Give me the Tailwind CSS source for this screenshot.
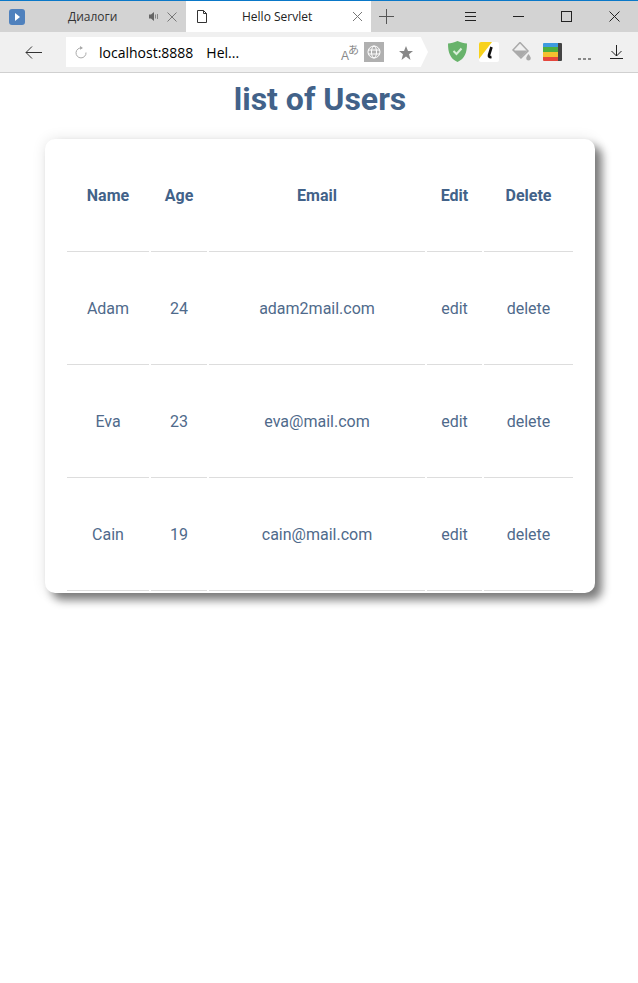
<!DOCTYPE html>
<html>
<head>
<meta charset="utf-8">
<script src="https://cdn.jsdelivr.net/npm/@tailwindcss/browser@4"></script>
</head>
<body class="bg-white font-['Roboto',sans-serif] h-[983px] overflow-hidden">
<div class="h-[73px] font-['Open_Sans','Noto_Sans',sans-serif] border-b border-[#d0d0d0]">
  <div class="h-px bg-[#0a78c8]"></div>
  <div class="h-[31px] bg-[#d3d3d3] flex items-stretch">
    <div class="w-[186px] flex items-center pl-[9px] shrink-0">
      <svg width="16" height="16" viewBox="0 0 16 16"><rect width="16" height="16" rx="3" fill="#4f81bd"/><path d="M6 4l5 4-5 4z" fill="#fff"/></svg>
      <span class="ml-[43px] text-[12px] text-[#333]">Диалоги</span>
      <svg class="ml-[32px]" width="10" height="9" viewBox="0 0 10 9"><path d="M0 2.500h2l3-2.500v9l-3-2.500H0z" fill="#666"/><path d="M6.500 2.500v4M8.500 2v5" stroke="#888" stroke-width="1"/></svg>
      <svg class="ml-[8px]" width="10" height="10" viewBox="0 0 10 10"><path d="M.5.500l9 9M9.500.500l-9 9" stroke="#777" fill="none"/></svg>
    </div>
    <div class="w-[185px] bg-white flex items-center shrink-0 pl-[11px]">
      <svg width="10" height="13" viewBox="0 0 10 13"><path d="M.5.500h6l3 3v9h-9zM6.500.500v3h3" fill="none" stroke="#333"/></svg>
      <span class="ml-[35px] text-[12px] text-[#222]">Hello Servlet</span>
      <svg class="ml-[41px]" width="9" height="9" viewBox="0 0 9 9"><path d="M0 0l9 9M9 0L0 9" stroke="#777" fill="none"/></svg>
    </div>
    <div class="flex-1 flex items-center pl-[8px] pr-[18px]">
      <svg width="15" height="15" viewBox="0 0 15 15"><path d="M7.500 0v15M0 7.500h15" stroke="#555"/></svg>
      <svg class="ml-[71px]" width="11" height="9" viewBox="0 0 11 9"><path d="M0 .500h11M0 4.500h11M0 8.500h11" stroke="#222"/></svg>
      <svg class="ml-[37px]" width="11" height="1" viewBox="0 0 11 1"><path d="M0 .500h11" stroke="#222"/></svg>
      <svg class="ml-[37px]" width="11" height="11" viewBox="0 0 11 11"><rect x=".5" y=".5" width="10" height="10" fill="none" stroke="#222"/></svg>
      <svg class="ml-[37px]" width="11" height="11" viewBox="0 0 11 11"><path d="M.5.500l10 10M10.500.500l-10 10" stroke="#222" fill="none"/></svg>
    </div>
  </div>
  <div class="h-[40px] bg-[#f0f0f0] flex items-center relative">
    <svg class="ml-[25px]" width="17" height="13" viewBox="0 0 17 13"><path d="M17 6.500H1M7 .500l-6 6 6 6" fill="none" stroke="#333"/></svg>
    <div class="ml-[24px] h-[30px] w-[362px] flex items-center bg-white relative [clip-path:polygon(0_0,98%_0,100%_50%,98%_100%,0_100%)]">
      <svg class="ml-[9px]" width="12" height="13" viewBox="0 0 12 13"><path d="M7 2a5 5 0 1 0 4 4.500" fill="none" stroke="#aaa"/><path d="M5 0l3 1.900L5 3.800z" fill="#aaa"/></svg>
      <span class="ml-[12px] text-[14px] text-black">localhost:8888</span>
      <span class="ml-[13px] text-[14px] text-black">Hel...</span>
      <span class="absolute left-[275px] top-[13px] text-[12px] leading-none text-[#888] font-['Liberation_Sans',sans-serif]">A</span>
      <span class="absolute left-[282px] top-[7px] text-[11px] leading-none text-[#888] font-['Noto_Sans_CJK_JP',sans-serif]">あ</span>
      <div class="absolute left-[298px] top-[5px] w-[20px] h-[20px] bg-[#b0b0b0] flex items-center justify-center">
        <svg width="14" height="14" viewBox="0 0 14 14"><g fill="none" stroke="#fff"><circle cx="7" cy="7" r="6"/><ellipse cx="7" cy="7" rx="2.500" ry="6"/><path d="M1 5h12M1 9h12"/></g></svg>
      </div>
      <svg class="absolute left-[333px] top-[9px]" width="14" height="14" viewBox="0 0 14 14"><path d="M7 0l2 5h5l-4 3.200L11.500 14 7 10.600 2.500 14 4 8.200 0 5h5z" fill="#888"/></svg>
    </div>
    <svg class="absolute left-[448px] top-[9px]" width="19" height="21" viewBox="0 0 19 21"><path d="M9.500 0C6 1.500 3 2.200 0 2.500c0 9 2 15 9.500 18.500C17 17.500 19 11.500 19 2.500 16 2.200 13 1.500 9.500 0z" fill="#68b36b"/><path d="M5.500 10l3 3 5-5.500" fill="none" stroke="#d9efd9" stroke-width="2"/></svg>
    <svg class="absolute left-[479px] top-[10px]" width="20" height="20" viewBox="0 0 20 20"><rect width="20" height="20" rx="2" fill="#fff"/><path d="M0 2a2 2 0 0 1 2-2h11L0 17z" fill="#f8d21c"/><path d="M12.500 5L10 13q-.6 2.500 2.500 2" fill="none" stroke="#111" stroke-width="2.600"/></svg>
    <svg class="absolute left-[511px] top-[10px]" width="21" height="20" viewBox="0 0 21 20"><path d="M9 .500L2 8l8 8 7-7z" fill="none" stroke="#aaa" stroke-width="1.500"/><path d="M2.500 8.500h14L10 15.500z" fill="#aaa"/><path d="M17.500 12c-1 1.500-2.300 3-2.300 4.200a2.300 2.300 0 0 0 4.600 0c0-1.200-1.300-2.700-2.300-4.200z" fill="#aaa"/></svg>
    <svg class="absolute left-[543px] top-[11px]" width="19" height="19" viewBox="0 0 19 19"><rect x="14" width="5" height="18" rx="1" fill="#444"/><path d="M1 0h14v4H0V1a1 1 0 0 1 1-1z" fill="#3d9be0"/><rect y="4" width="15" height="5" fill="#4caf3f"/><rect y="9" width="15" height="5" fill="#f3c02f"/><path d="M0 14h15v4H1a1 1 0 0 1-1-1z" fill="#e5473d"/></svg>
    <svg class="absolute left-[578px] top-[26px]" width="13" height="2" viewBox="0 0 13 2"><path d="M0 1h3M5 1h3M10 1h3" stroke="#222" stroke-width="1"/></svg>
    <svg class="absolute left-[610px] top-[13px]" width="13" height="14" viewBox="0 0 13 14"><path d="M6.500 0v11M1.500 6l5 5 5-5M0 13.500h13" fill="none" stroke="#222"/></svg>
  </div>
</div>
<h1 class="text-[32px] leading-[37px] font-bold text-center text-[#426289] mt-[8px] mb-[21px] pl-[2px]">list of Users</h1>
<div class="ml-[45px] w-[550px] h-[454px] px-[20px] bg-white rounded-[10px] shadow-[0_0_14px_rgba(0,0,0,0.1),7px_7px_10px_#808080]">
  <table class="w-[510px] table-fixed border-separate border-spacing-[2px] text-[16px] text-[#4f6a8b]">
    <colgroup><col class="w-[82px]"><col class="w-[56px]"><col class="w-[216px]"><col class="w-[55px]"><col class="w-[89px]"></colgroup>
    <thead>
      <tr class="h-[111px] font-bold text-[#426289]">
        <th class="border-b border-[#ddd] font-bold">Name</th><th class="border-b border-[#ddd] font-bold">Age</th><th class="border-b border-[#ddd] font-bold">Email</th><th class="border-b border-[#ddd] font-bold">Edit</th><th class="border-b border-[#ddd] font-bold">Delete</th>
      </tr>
    </thead>
    <tbody class="text-center">
      <tr class="h-[111px]"><td class="border-b border-[#ddd]">Adam</td><td class="border-b border-[#ddd]">24</td><td class="border-b border-[#ddd]">adam2mail.com</td><td class="border-b border-[#ddd]">edit</td><td class="border-b border-[#ddd]">delete</td></tr>
      <tr class="h-[111px]"><td class="border-b border-[#ddd]">Eva</td><td class="border-b border-[#ddd]">23</td><td class="border-b border-[#ddd]">eva@mail.com</td><td class="border-b border-[#ddd]">edit</td><td class="border-b border-[#ddd]">delete</td></tr>
      <tr class="h-[111px]"><td class="border-b border-[#ddd]">Cain</td><td class="border-b border-[#ddd]">19</td><td class="border-b border-[#ddd]">cain@mail.com</td><td class="border-b border-[#ddd]">edit</td><td class="border-b border-[#ddd]">delete</td></tr>
    </tbody>
  </table>
</div>
</body>
</html>
